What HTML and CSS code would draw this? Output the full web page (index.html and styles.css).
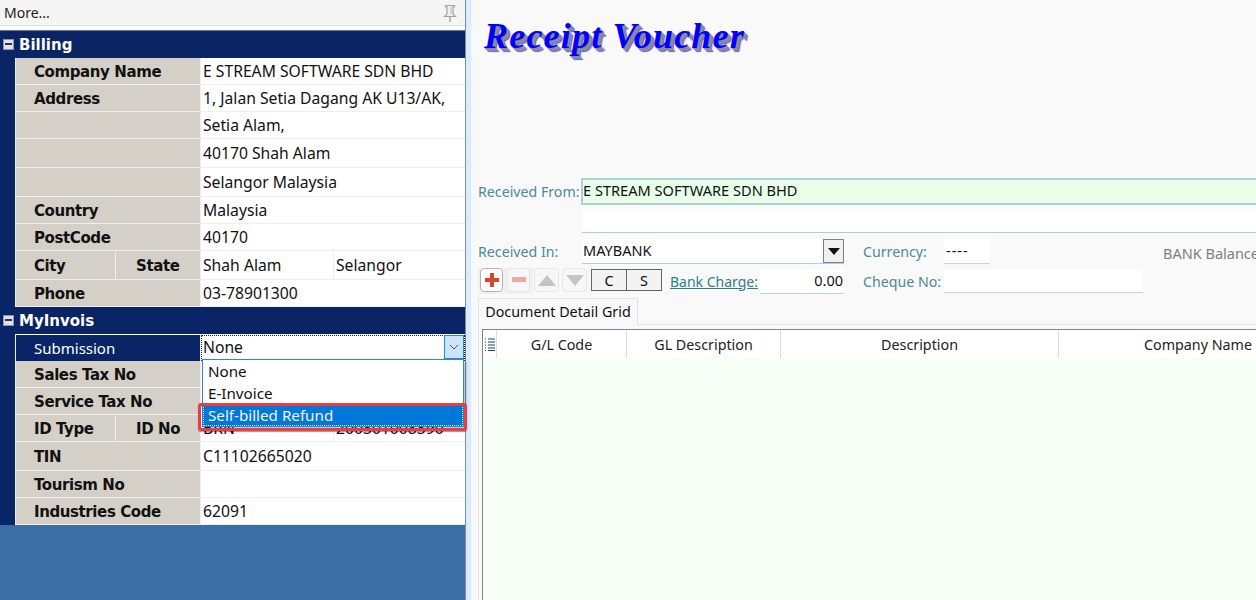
FILE: index.html
```html
<!DOCTYPE html>
<html lang="en">
<head>
  <meta charset="UTF-8">
  <meta name="viewport" content="width=device-width, initial-scale=1.0">
  <title>Receipt Voucher</title>
  <link rel="stylesheet" href="styles.css">
</head>
<body>
  <div class="app">
    <aside class="side">
      <div class="more-bar">
        <span>More...</span>
        <svg class="pin" width="16" height="18" viewBox="0 0 16 18">
          <path d="M3.500 1.500h9v1.500h-1.500v7l2.500 2.500h-11l2.500-2.500v-7h-1.500z" fill="#f0f0f0" stroke="#a3a3a3" stroke-width="1.200"/>
          <path d="M9 3v7" stroke="#c4c4c4" stroke-width="1.200"/>
          <path d="M8 13v5" stroke="#a3a3a3" stroke-width="1.400"/>
        </svg>
      </div>

      <div class="panel-head"><span class="toggle"></span>Billing</div>
      <div class="panel-body">
        <div class="row"><div class="lbl">Company Name</div><div class="val">E STREAM SOFTWARE SDN BHD</div></div>
        <div class="row"><div class="lbl">Address</div><div class="val">1, Jalan Setia Dagang AK U13/AK,</div></div>
        <div class="row"><div class="lbl"></div><div class="val">Setia Alam,</div></div>
        <div class="row tall"><div class="lbl"></div><div class="val">40170 Shah Alam</div></div>
        <div class="row tall"><div class="lbl"></div><div class="val">Selangor Malaysia</div></div>
        <div class="row"><div class="lbl">Country</div><div class="val">Malaysia</div></div>
        <div class="row"><div class="lbl">PostCode</div><div class="val">40170</div></div>
        <div class="row tall">
          <div class="lbl split"><span class="lbl-a">City</span><span class="lbl-b">State</span></div>
          <div class="val split"><span class="val-a">Shah Alam</span><span class="val-b">Selangor</span></div>
        </div>
        <div class="row"><div class="lbl">Phone</div><div class="val">03-78901300</div></div>
      </div>

      <div class="panel-head second"><span class="toggle"></span>MyInvois</div>
      <div class="panel-body">
        <div class="row active">
          <div class="lbl">Submission</div>
          <div class="val">None</div>
        </div>
        <div class="row"><div class="lbl">Sales Tax No</div><div class="val"></div></div>
        <div class="row"><div class="lbl">Service Tax No</div><div class="val"></div></div>
        <div class="row">
          <div class="lbl split"><span class="lbl-a">ID Type</span><span class="lbl-b">ID No</span></div>
          <div class="val split"><span class="val-a">BRN</span><span class="val-b">200301008390</span></div>
        </div>
        <div class="row tall"><div class="lbl">TIN</div><div class="val">C11102665020</div></div>
        <div class="row"><div class="lbl">Tourism No</div><div class="val"></div></div>
        <div class="row"><div class="lbl">Industries Code</div><div class="val">62091</div></div>
      </div>
      <div class="side-fill"></div>

      <!-- open dropdown lies over the rows -->
      <button class="drop-btn">
        <svg width="10" height="6" viewBox="0 0 10 6"><path d="M1 1l4 4 4-4" fill="none" stroke="#555" stroke-width="1"/></svg>
      </button>
      <ul class="drop-list">
        <li>None</li>
        <li>E-Invoice</li>
        <li class="picked">Self-billed Refund</li>
      </ul>
      <div class="callout"></div>
    </aside>

    <div class="divider"></div>

    <main class="voucher">
      <div class="title-area">
        <h1>Receipt Voucher</h1>
      </div>

      <div class="line from-line">
        <label class="cap">Received From:</label>
        <div class="from-box">E STREAM SOFTWARE SDN BHD</div>
      </div>
      <div class="from-second"></div>

      <div class="line in-line">
        <label class="cap">Received In:</label>
        <div class="combo">
          <span>MAYBANK</span>
          <span class="combo-btn"></span>
        </div>
        <label class="cap cap-right">Currency:</label>
        <div class="field currency">----</div>
        <span class="balance">BANK Balance</span>
      </div>

      <div class="line tool-line">
        <div class="tool-btns">
          <div class="tool-group">
            <button class="tool on">
              <svg width="16" height="16" viewBox="0 0 16 16"><path d="M6 1h4v5h5v4h-5v5H6v-5H1V6h5z" fill="#d9452b"/></svg>
            </button>
            <button class="tool">
              <svg width="16" height="6" viewBox="0 0 16 6"><rect x="1" y="0" width="14" height="5" fill="#eeaaa0"/></svg>
            </button>
          </div>
          <button class="tool move">
            <svg width="18" height="11" viewBox="0 0 18 11"><path d="M9 0l9 11H0z" fill="#c4c4c4"/></svg>
          </button>
          <button class="tool move">
            <svg width="18" height="11" viewBox="0 0 18 11"><path d="M0 0h18L9 11z" fill="#c4c4c4"/></svg>
          </button>
        </div>
        <button class="key first-key">C</button>
        <button class="key">S</button>
        <a class="charge-link">Bank Charge:</a>
        <div class="field charge">0.00</div>
        <label class="cap cap-right">Cheque No:</label>
        <div class="field cheque"></div>
      </div>

      <div class="tabs">
        <div class="tab">Document Detail Grid</div>
      </div>

      <div class="tab-page">
        <div class="grid">
          <div class="grid-head">
            <div class="col col-mark">
              <svg width="10" height="13" viewBox="0 0 10 13"><path d="M0 1h1M3 1h7M0 4h1M3 4h7M0 7h1M3 7h7M0 10h1M3 10h7M0 12.500h1M3 12.500h7" stroke="#14465a" stroke-width="1"/></svg>
            </div>
            <div class="col col-code">G/L Code</div>
            <div class="col col-gl">GL Description</div>
            <div class="col col-desc">Description</div>
            <div class="col col-company">Company Name</div>
          </div>
        </div>
      </div>
    </main>
  </div>
</body>
</html>
```

FILE: styles.css
```css
* {
  box-sizing: border-box;
}
html, body {
  margin: 0;
  height: 600px;
  overflow: hidden;
}
body {
  font-family: 'Noto Sans', sans-serif;
  font-size: 15px;
  color: #111;
}
.app {
  display: flex;
  width: 1256px;
  height: 600px;
}

/* left panel */
.side {
  position: relative;
  width: 465px;
  flex: none;
  display: flex;
  flex-direction: column;
  background: #fff;
}
.more-bar {
  height: 26px;
  margin-bottom: 4px;
  padding: 0 7px 0 4px;
  display: flex;
  align-items: center;
  justify-content: space-between;
  background: #f5f5f5;
  border-bottom: 1px solid #ddd;
  font-size: 14px;
  color: #222;
}
.panel-head {
  height: 28px;
  display: flex;
  align-items: center;
  padding-left: 3px;
  background: #0a2566;
  border-top: 1px solid #6b7690;
  color: #fff;
  font-family: 'DejaVu Sans', sans-serif;
  font-weight: bold;
  font-size: 15px;
}
.panel-head.second {
  height: 27px;
  border-top: 0;
}
.toggle {
  position: relative;
  width: 11px;
  height: 11px;
  margin-right: 5px;
  background: #dfe4ea;
  border: 1px solid #8c95ad;
}
.toggle::after {
  content: "";
  position: absolute;
  left: 1px;
  right: 1px;
  top: 3px;
  height: 2px;
  background: #26365f;
}
.panel-body {
  padding-left: 15px;
  background: #0a2566;
}
.row {
  display: grid;
  grid-template-columns: 185px 1fr;
  height: 27px;
  background: #fff;
  border-left: 1px solid #eee;
  border-bottom: 1px solid #eee;
}
.row.tall {
  height: 29px;
}
.lbl {
  display: flex;
  align-items: center;
  padding: 1px 0 0 18px;
  background: #d4d0c8;
  border-right: 1px solid #eee;
  font-family: 'DejaVu Sans', sans-serif;
  font-weight: bold;
  font-size: 15px;
  letter-spacing: -0.400px;
  color: #111;
}
.val {
  display: flex;
  align-items: center;
  padding-left: 2px;
  font-size: 15.700px;
  background: #fff;
  color: #111;
}
.lbl.split, .val.split {
  padding-left: 0;
}
.lbl-a {
  width: 100px;
  height: 100%;
  display: flex;
  align-items: center;
  padding-left: 18px;
  border-right: 1px solid #eee;
}
.lbl-b {
  padding-left: 20px;
}
.val-a {
  width: 133px;
  height: 100%;
  display: flex;
  align-items: center;
  padding-left: 2px;
  border-right: 1px solid #eee;
}
.val-b {
  padding-left: 2px;
}
.row.active {
  border-top: 1px solid #fff;
}
.row.active .lbl {
  padding-top: 0;
  padding-bottom: 1px;
  background: #0a2566;
  color: #fff;
  font-family: 'Noto Sans', sans-serif;
  font-weight: normal;
  font-size: 15px;
  letter-spacing: 0;
}
.row.active .val {
  padding-left: 1px;
  padding-bottom: 2px;
  border: 1px dotted #222;
}
.side-fill {
  flex: 1;
  background: #3a6ea5;
}
.drop-btn {
  position: absolute;
  left: 444px;
  top: 335px;
  width: 20px;
  height: 24px;
  padding: 0;
  background: #cce4f7;
  border: 1px solid #2b86d3;
  display: flex;
  align-items: center;
  justify-content: center;
}
.drop-list {
  position: absolute;
  left: 202px;
  top: 359px;
  width: 262px;
  height: 68px;
  margin: 0;
  padding: 0;
  list-style: none;
  background: #fff;
  border: 1px solid #2b86d3;
  box-shadow: 2px 2px 3px rgba(0, 0, 0, 0.25);
  font-size: 15.200px;
}
.drop-list li {
  height: 22px;
  line-height: 22px;
  padding-left: 5px;
}
.drop-list .picked {
  height: 21px;
  line-height: 18px;
  margin-top: 1px;
  padding-left: 4px;
  background: #0078d7;
  border: 1px dotted #cfe6f8;
  color: #f2f2f2;
}
.callout {
  position: absolute;
  left: 198px;
  top: 403px;
  width: 269px;
  height: 28px;
  border: 3px solid #ee3b40;
  border-radius: 3px;
  box-shadow: 0 1px 1px rgba(0, 0, 0, 0.4);
}
.divider {
  width: 7px;
  flex: none;
  background: #d8ecff;
  border-left: 1px solid #8088a0;
  border-right: 1px solid #eef6ff;
}

/* voucher form */
.voucher {
  flex: 1;
  min-width: 0;
  overflow: hidden;
  padding-left: 6px;
  background: #f9f9f9;
  color: #111;
}
.title-area {
  height: 178px;
  padding: 14px 0 0 6px;
}
h1 {
  margin: 0;
  font-family: 'Liberation Serif', serif;
  font-style: italic;
  font-weight: bold;
  font-size: 36px;
  line-height: 44px;
  letter-spacing: 1.200px;
  color: #0000ff;
  text-shadow: 1px 1px 0 #8a8a9a, 2px 2px 0 #8a8a9a, 3px 3px 0 #8a8a9a, 4px 4px 1px #5a5ad8;
}
.line {
  display: flex;
  align-items: center;
}
.cap {
  width: 103px;
  flex: none;
  padding-bottom: 1px;
  font-size: 14.200px;
  color: #4b8a96;
  white-space: nowrap;
}
.cap-right {
  width: 81px;
  margin-left: 19px;
}
.from-box {
  width: 690px;
  height: 27px;
  flex: none;
  padding-left: 0;
  line-height: 21px;
  font-size: 14.600px;
  background: #e9ffe9;
  border: 2px solid #a8d4d4;
  white-space: nowrap;
}
.from-second {
  height: 24px;
  margin: 4px 0 0 104px;
  background: #fff;
  border-bottom: 1px solid #a9d3d3;
}
.in-line {
  height: 25px;
  margin-top: 6px;
}
.in-line .cap:first-child {
  width: 104px;
}
.combo {
  width: 262px;
  height: 25px;
  flex: none;
  display: flex;
  justify-content: space-between;
  padding-left: 1px;
  line-height: 23px;
  font-size: 14.500px;
  background: #fff;
  border-bottom: 1px solid #a9d3d3;
}
.combo-btn {
  position: relative;
  width: 21px;
  height: 24px;
  background: #f0f0f0;
  border: 1px solid #808080;
}
.combo-btn::after {
  content: "";
  position: absolute;
  left: 4px;
  top: 8px;
  border-left: 6px solid transparent;
  border-right: 6px solid transparent;
  border-top: 7px solid #111;
}
.field {
  flex: none;
  background: #fff;
  border-bottom: 1px solid #b9d8d8;
  font-size: 14.500px;
}
.currency {
  width: 46px;
  height: 25px;
  padding-left: 2px;
  line-height: 23px;
  letter-spacing: 1px;
}
.balance {
  margin-left: 173px;
  margin-top: 3px;
  font-size: 14.500px;
  color: #7a7f85;
  white-space: nowrap;
}
.tool-line {
  height: 26px;
  margin-top: 4px;
}
.tool-line .cap {
  padding: 1px 0 0;
}
.tool-btns {
  display: flex;
  width: 113px;
  height: 26px;
  flex: none;
  gap: 3px;
}
.tool-group {
  display: flex;
  gap: 4px;
  width: 55px;
  height: 26px;
  margin-right: -2px;
  padding-left: 2px;
  background: #f0f0f0;
}
.tool {
  width: 23px;
  height: 24px;
  padding: 0;
  display: flex;
  align-items: center;
  justify-content: center;
  background: #f7f7f7;
  border: 1px solid #e6e6e6;
  border-radius: 4px;
}
.tool.on {
  background: #fff;
  border-color: #b5b5b5;
}
.tool.move {
  width: 25px;
}
.key {
  width: 36px;
  height: 22px;
  padding: 0;
  margin-top: -3px;
  font-family: inherit;
  font-size: 14.500px;
  color: #111;
  background: #f3f3f3;
  border: 1px solid #666;
}
.first-key {
  margin-right: -1px;
}
.charge-link {
  width: 90px;
  flex: none;
  margin-left: 8px;
  font-size: 14px;
  color: #2f7f86;
  text-decoration: underline;
  white-space: nowrap;
}
.charge {
  width: 84px;
  height: 25px;
  padding-right: 1px;
  text-align: right;
  line-height: 23px;
}
.cheque {
  width: 199px;
  height: 24px;
}
.tabs {
  height: 31px;
  padding-top: 4px;
  border-bottom: 1px solid #e3e3e3;
}
.tab {
  width: 160px;
  height: 27px;
  text-align: center;
  line-height: 25px;
  font-size: 14.300px;
  background: #f9f9f9;
  border: 1px solid #e3e3e3;
  border-bottom: 0;
}
.tab-page {
  padding: 4px 0 0 3px;
  border-left: 1px solid #e3e3e3;
}
.grid {
  height: 272px;
  background: #f5fff5;
  border-top: 1px solid #83838f;
  border-left: 1px solid #83838f;
}
.grid-head {
  display: flex;
  height: 28px;
  background: #fff;
  font-size: 14.300px;
  color: #222;
}
.col {
  flex: none;
  height: 100%;
  display: flex;
  align-items: center;
  justify-content: center;
  border-right: 1px solid #ddd;
}
.col-mark { width: 14px; }
.col-code { width: 130px; }
.col-gl { width: 154px; }
.col-desc { width: 278px; }
.col-company {
  width: 198px;
  justify-content: flex-end;
  padding-right: 5px;
  border-right: 0;
  white-space: nowrap;
}
```
